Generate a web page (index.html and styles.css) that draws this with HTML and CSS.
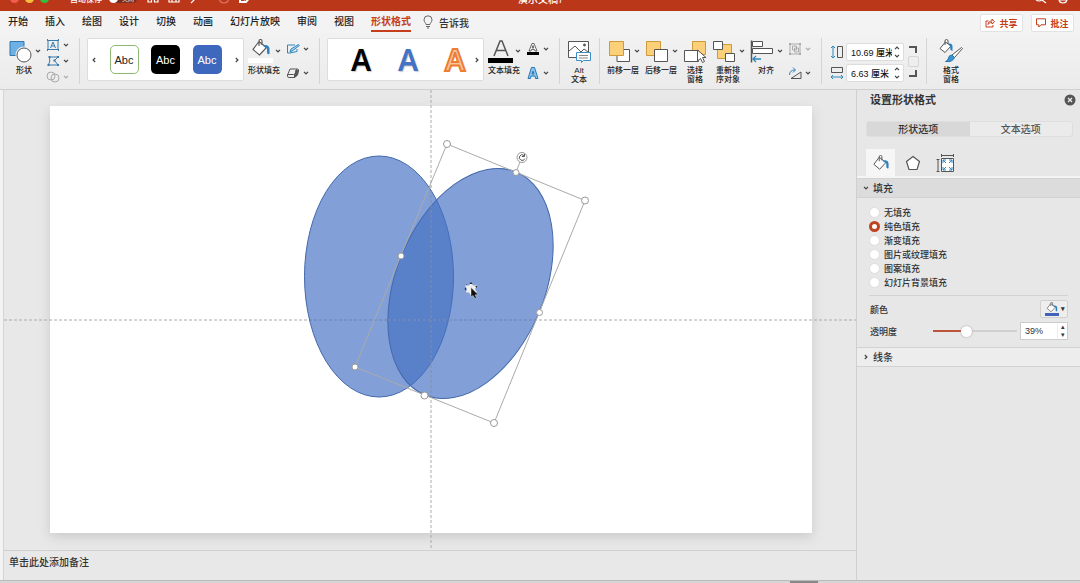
FILE: index.html
```html
<!DOCTYPE html>
<html lang="zh-CN">
<head>
<meta charset="utf-8">
<title>演示文稿7</title>
<link rel="stylesheet" href="styles.css">
</head>
<body>
<svg class="defs" aria-hidden="true">
  <symbol id="chev" viewBox="0 0 6 4"><path d="M1 .8 3 2.9 5 .8" fill="none" stroke="currentColor" stroke-width="1.2"/></symbol>
  <symbol id="bucket" viewBox="0 0 20 18"><path d="M8 2.5 2 10.5l6.5 5.5 7-7.500L8 2.500M8 7V2a1.500 1.500 0 0 1 3 0v4" fill="#fff" stroke="#555" stroke-width="1.100"/><path d="M11.500 6.500c4-1.500 6.500 0 7 3v5.500c-2 .5-2.500-.5-2.500-2V9.500z" fill="#2f7fbd"/></symbol>
</svg>
<div class="app">
  <header class="titlebar">
    <div class="titlebar-row">
      <div class="lights"><i class="light red"></i><i class="light yellow"></i><i class="light green"></i></div>
      <span class="autosave">自动保存</span>
      <span class="switch"><i></i><b>关闭</b></span>
      <svg class="quick" viewBox="0 0 106 22" fill="none" stroke="#fff" stroke-width="1.200"><path d="M1 8v6h3.500v-4M7.500 10v4H11V8M22 6v8h10V6M25 14v-3h4v3M44 15l8-8M53 11l4-1"/><circle cx="77" cy="10" r="5" stroke="#df7763"/><path d="M93 8v6h6l5-6M97 12l6-7" stroke-width="2"/></svg>
      <h1 class="doc-title">演示文稿7</h1>
      <svg class="tools" viewBox="0 0 36 22" fill="none" stroke="#fff" stroke-width="1.200"><circle cx="5" cy="9" r="4"/><path d="m8 12 4 3M25 9v2q0 4 4 4t4-4V9zM25 12h8"/></svg>
    </div>
  </header>

  <nav class="tabs">
    <div class="tab-list">
      <button class="tab">开始</button><button class="tab">插入</button><button class="tab">绘图</button><button class="tab">设计</button><button class="tab">切换</button><button class="tab">动画</button><button class="tab">幻灯片放映</button><button class="tab">审阅</button><button class="tab">视图</button><button class="tab active">形状格式</button>
    </div>
    <button class="tell"><svg width="10" height="14" viewBox="0 0 10 14" fill="none" stroke="#666"><path d="M3 9.500C3 8 1 7 1 4.800a4 4 0 0 1 8 0C9 7 7 8 7 9.500zM3 11.500h4M4 13h2"/></svg>告诉我</button>
    <div class="actions">
      <button class="action"><svg width="10" height="10" viewBox="0 0 10 10" fill="none" stroke="#c43e1c"><path d="M3.500 3H1v6h7V7M3 6.500c.5-3 2-3.500 4-3.500V1l2.500 2.800L7 6V4.500C5 4.500 4 5 3 6.500z"/></svg>共享</button>
      <button class="action"><svg width="10" height="10" viewBox="0 0 10 10" fill="none" stroke="#c43e1c"><path d="M.5.8h9v6H5L2.800 9V6.800H.5z"/></svg>批注</button>
    </div>
  </nav>

  <div class="ribbon">
    <button class="big"><span class="face"><svg class="ico" viewBox="0 0 24 24"><path d="M2 2.500h14v14H2z" fill="#6cb0e6" stroke="#3577ad"/><circle cx="16" cy="16" r="8.500" fill="#f0f0f0"/><circle cx="16" cy="16" r="7" fill="#fff" stroke="#555"/></svg><svg class="chev"><use href="#chev"/></svg></span><span class="label">形状</span></button>
    <div class="stack three">
      <button class="small" aria-label="文本框"><svg class="sico" viewBox="0 0 14 12" fill="none" stroke="#397bac"><path d="M2 1.500h10v9H2z"/><path d="m4.500 9 2.500-6 2.500 6M5.300 7h3.400"/><path d="M1 1h1M12 1h1M1 11h1M12 11h1" stroke-width="2"/></svg><svg class="chev"><use href="#chev"/></svg></button>
      <button class="small" aria-label="编辑形状"><svg class="sico" viewBox="0 0 14 12" fill="none" stroke="#397bac"><path d="M3.500 2H12L8.500 5.500 12 10H2.500Q4.500 6 3.500 2"/><path d="M2.500 2h2M11 2h2M1.500 10h2M11 10h2M7.500 5.500h2" stroke-width="2"/></svg><svg class="chev"><use href="#chev"/></svg></button>
      <button class="small dim" aria-label="合并形状"><svg class="sico" viewBox="0 0 14 12" fill="none" stroke="#aaa"><circle cx="5" cy="5" r="4"/><circle cx="9" cy="7" r="4"/></svg><svg class="chev"><use href="#chev"/></svg></button>
    </div>
    <i class="sep"></i>
    <div class="gallery">
      <button class="arrow" aria-label="上一个"><svg class="chev prev"><use href="#chev"/></svg></button>
      <button class="swatch outline">Abc</button><button class="swatch black">Abc</button><button class="swatch blue">Abc</button>
      <button class="arrow" aria-label="下一个"><svg class="chev right"><use href="#chev"/></svg></button>
    </div>
    <button class="big"><span class="face fill-face"><span class="fill-icon"><svg viewBox="0 0 20 18" width="20" height="18"><use href="#bucket"/></svg><i class="bar white"></i></span><svg class="chev"><use href="#chev"/></svg></span><span class="label">形状填充</span></button>
    <div class="stack">
      <button class="small" aria-label="形状轮廓"><svg class="sico" viewBox="0 0 14 12" fill="none" stroke="#2f86bd"><path d="M9 2H1.500v8H4l7-1.500V6"/><path d="m4 9 1-3 7.500-4.500.8 1L7 7.500z" fill="#a6d1ed"/></svg><svg class="chev"><use href="#chev"/></svg></button>
      <button class="small" aria-label="形状效果"><svg class="sico" viewBox="0 0 14 12" fill="#eee" stroke="#555"><path d="M4 2h7.500Q13 2 12.500 4l-1 4L9 10.500H3Q1 10.500 1.500 8z"/><path d="M1.500 7.500h6Q9 7.500 9.500 6l1-4M8.500 7.500v3"/><path d="m9 8 1-5 2 .5-1 4.500-2 2z" fill="#555"/></svg><svg class="chev"><use href="#chev"/></svg></button>
    </div>
    <i class="sep"></i>
    <div class="gallery art">
      <button class="wordart ink">A</button><button class="wordart azure">A</button><button class="wordart orange">A</button>
      <button class="arrow" aria-label="更多"><svg class="chev right"><use href="#chev"/></svg></button>
    </div>
    <button class="big"><span class="face fill-face"><span class="fill-icon"><svg viewBox="0 0 20 18" width="20" height="18"><path d="m3 17 6-15h2l6 15M5 11.500h10" fill="none" stroke="#555" stroke-width="1.500"/></svg><i class="bar"></i></span><svg class="chev"><use href="#chev"/></svg></span><span class="label">文本填充</span></button>
    <div class="stack">
      <button class="small" aria-label="文本轮廓"><svg class="sico" viewBox="0 0 14 12"><path d="m3 8 3-7.500h2L11 8H9l-.5-1.500h-3L5 8zM6.200 5 7 2.500 7.800 5z" fill="#fff" stroke="#555" stroke-width=".9"/><path d="M1 9h12v3H1z"/></svg><svg class="chev"><use href="#chev"/></svg></button>
      <button class="small" aria-label="文本效果"><svg class="sico" viewBox="0 0 14 12"><path d="M2 11.500 5.500.5h3l3.500 11H9.500L9 9H5l-.5 2.500z" fill="#8dc7ef" stroke="#2477b3"/><path d="m6 7 1-3 1 3z" fill="#fff" stroke="#2477b3"/></svg><svg class="chev"><use href="#chev"/></svg></button>
    </div>
    <i class="sep"></i>
    <button class="big narrow"><span class="face"><svg class="ico" viewBox="0 0 24 24" fill="#fff" stroke="#555"><path d="M1.500 2.500h20v16h-20z"/><path d="m2 12 6-5 6 6 3-3 4 3" fill="none"/><circle cx="17.500" cy="6" r="1" fill="#555"/><path d="M9.500 13.500h14v8h-7l-2 2v-2h-5z" stroke="#3a90c6"/><path d="M12 16.500h9M12 19h9" stroke="#888"/></svg></span><span class="label">Alt<br>文本</span></button>
    <i class="sep"></i>
    <button class="big"><span class="face"><svg class="ico" viewBox="0 0 24 24"><path d="M10 10.500h12.500v12H10z" fill="#fff" stroke="#555"/><path d="M2.500 2.500h14v14h-14z" fill="#fbd078" stroke="#cd9b3c"/></svg><svg class="chev"><use href="#chev"/></svg></span><span class="label">前移一层</span></button>
    <button class="big"><span class="face"><svg class="ico" viewBox="0 0 24 24"><path d="M1.500 2.500h14v14h-14z" fill="#fbd078" stroke="#cd9b3c"/><path d="M9.500 10.500h13v12h-13z" fill="#fff" stroke="#555"/></svg><svg class="chev"><use href="#chev"/></svg></span><span class="label">后移一层</span></button>
    <button class="big narrow"><span class="face"><svg class="ico" viewBox="0 0 24 24"><path d="M9.500 2.500h13v13h-13z" fill="#fbd078" stroke="#cd9b3c"/><path d="M1.500 11.500h14v11h-14z" fill="#fff" stroke="#555"/><path d="M14.500 11v11l3-2.500 2 4 2-1-2-4h3.500z" fill="#fff" stroke="#555"/></svg></span><span class="label">选择<br>窗格</span></button>
    <button class="big"><span class="face"><svg class="ico" viewBox="0 0 24 24"><path d="M5.500 5.500h14v14h-14z" fill="#fbd078" stroke="#cd9b3c"/><path d="M1.500 2.500h9v8h-9zM13.500 14.500h9v8h-9z" fill="#fff" stroke="#555"/></svg><svg class="chev"><use href="#chev"/></svg></span><span class="label">重新排<br>序对象</span></button>
    <button class="big"><span class="face"><svg class="ico" viewBox="0 0 24 24" fill="#fff" stroke="#555"><path d="M1.500 1.500v22" stroke-width="1.500"/><path d="M2.500 2.500h10v5h-10zM2.500 9.500h20v5h-20z"/><path d="M11 20H3m3-3-3 3 3 3" fill="none" stroke="#2f86bd" stroke-width="1.300"/></svg><svg class="chev"><use href="#chev"/></svg></span><span class="label">对齐</span></button>
    <div class="stack">
      <button class="small dim" aria-label="组合"><svg class="sico" viewBox="0 0 14 12" fill="none" stroke="#aaa"><path d="M2 1h10v10H2zM4.500 3h4v4h-4zM6.500 5h4v4h-4z"/><path d="M1 1h2M11 1h2M1 11h2M11 11h2" stroke-width="2"/></svg><svg class="chev"><use href="#chev"/></svg></button>
      <button class="small" aria-label="旋转"><svg class="sico" viewBox="0 0 14 12" fill="none" stroke="#555"><path d="M3 11.500h10V5z"/><path d="M1.500 8Q1.500 3 7 3M5 .5 7.500 3 5 5.500" stroke="#2f86bd"/></svg><svg class="chev"><use href="#chev"/></svg></button>
    </div>
    <i class="sep"></i>
    <div class="size">
      <div class="size-rows">
        <div class="size-row"><svg class="sico" viewBox="0 0 14 14" fill="none" stroke="#555"><path d="M7.500 1.500h5v11h-5z"/><path d="M3 1v12M1 3l2-2 2 2M1 11l2 2 2-2" stroke="#2f86bd"/></svg><div class="spin"><input aria-label="高度" value="10.69 厘米"><span class="spin-btns"><button aria-label="增加高度"><svg class="chev up"><use href="#chev"/></svg></button><button aria-label="减少高度"><svg class="chev"><use href="#chev"/></svg></button></span></div></div>
        <div class="size-row"><svg class="sico" viewBox="0 0 14 14" fill="none" stroke="#555"><path d="M1.500 1.500h11v5h-11z"/><path d="M1 11h12M3 9l-2 2 2 2M11 9l2 2-2 2" stroke="#2f86bd"/></svg><div class="spin"><input aria-label="宽度" value="6.63 厘米"><span class="spin-btns"><button aria-label="增加宽度"><svg class="chev up"><use href="#chev"/></svg></button><button aria-label="减少宽度"><svg class="chev"><use href="#chev"/></svg></button></span></div></div>
      </div>
      <div class="lock"><i class="bracket"></i><input type="checkbox" aria-label="锁定纵横比"><i class="bracket bottom"></i></div>
    </div>
    <i class="sep"></i>
    <button class="big pane"><span class="face"><svg class="ico" viewBox="0 0 24 24"><path d="M6.500 3 1 9.500l5 4L12 7zM6 6V2a1.500 1.500 0 0 1 3 0v3" fill="#fff" stroke="#555"/><path d="M9 5c3-1 4 0 4.500 2v5l-2-1-.5-4z" fill="#2f7fbd"/><path d="M22.500 8.500 13 16l2.500 2.500 8-9z" fill="#fff" stroke="#555"/><path d="M13 16q-3 0-3.500 3T6.500 22.500q7 1 9-4z" fill="#3b93d4" stroke="#2776ac"/></svg></span><span class="label">格式<br>窗格</span></button>
  </div>

  <div class="workspace">
    <main class="editor">
      <svg class="canvas" viewBox="4 90 852 460" role="img" aria-label="两个相交的椭圆">
        <defs><filter id="shade" x="-5%" y="-5%" width="110%" height="112%"><feDropShadow dx="0" dy="4" stdDeviation="6" flood-opacity=".13"/></filter></defs>
        <rect x="50" y="106" width="762" height="427" fill="#fff" filter="url(#shade)"/>
        <path class="guide" d="M4 320H856M431 90V550"/>
        <ellipse class="shape" cx="379" cy="276.500" rx="74.500" ry="120.500"/>
        <ellipse class="shape" cx="470.500" cy="283.500" rx="74.500" ry="120.500" transform="rotate(22.200 470.500 283.500)"/>
        <path class="guide soft" d="M431 185V398M388 320H452"/>
        <path class="frame" d="M447 144 585 200.500 494 423 355 367zM516 172l6-15"/>
        <g class="handles">
          <circle cx="447" cy="144" r="3.500"/><circle cx="585" cy="200.500" r="3.500"/><circle cx="494" cy="423" r="3.500"/><circle cx="355" cy="367" r="3"/>
          <circle cx="516" cy="172.500" r="3"/><circle cx="539.500" cy="312.500" r="3"/><circle cx="424.500" cy="395.500" r="3.500"/><circle cx="401" cy="256" r="3"/>
          <circle cx="522" cy="157.500" r="5"/>
        </g>
        <path d="M524 155.500a2.800 2.800 0 1 0 .8 3M524.500 154v2.500H522" fill="none" stroke="#555"/>
        <path d="m471 282.500 2 3h4l-2 3.500 2 3.500h-4l-2 3-2-3h-3l1-3.500-2-3.500h4z" fill="#eee"/>
        <path d="m469.500 284 1.500-2 1.500 2zM466 287.500l-1.500 1.500 1.500 1.500zM475 286h2v2zM466 285v-1h1z" fill="#222"/>
        <path d="m471 287.500 7 7-3 .5 1.500 2.500-1.500 1-2-3-2 1.500z" fill="#111" stroke="#ddd" stroke-width=".5"/>
      </svg>
      <textarea class="notes" aria-label="备注" rows="1">单击此处添加备注</textarea>
    </main>

    <aside class="panel">
      <div class="panel-head"><h2>设置形状格式</h2><button class="close" aria-label="关闭"><svg width="12" height="12" viewBox="0 0 12 12"><circle cx="6" cy="6" r="5.500" fill="#555"/><path d="m4 4 4 4M8 4 4 8" stroke="#eee" stroke-width="1.300"/></svg></button></div>
      <div class="segments"><button class="seg on">形状选项</button><button class="seg">文本选项</button></div>
      <div class="icon-tabs">
        <button class="icon-tab on" aria-label="填充与线条"><svg width="18" height="16" viewBox="0 0 20 18"><use href="#bucket"/></svg></button>
        <button class="icon-tab" aria-label="效果"><svg width="16" height="16" viewBox="0 0 16 16"><path d="m8 1.500 6.500 5L12 14.500H4L1.500 6.500z" fill="#fff" stroke="#555" stroke-width="1.200"/></svg></button>
        <button class="icon-tab" aria-label="大小与属性"><svg width="18" height="18" viewBox="0 0 18 18" fill="none" stroke="#555"><path d="M5.500 4.500h12v13h-12z" fill="#fff"/><path d="M5 1.500h13M5.500 0v3M17.500 0v3M2 5v13M.5 5.500h3M.5 17.500h3"/><path d="m7 6 3 3M16 6l-3 3M7 16l3-3M16 16l-3-3M7 9V6h3M13 6h3v3M7 13v3h3M13 16h3v-3" stroke="#2f86bd"/></svg></button>
      </div>
      <button class="section open"><svg class="chev"><use href="#chev"/></svg>填充</button>
      <div class="section-body">
        <fieldset class="radios">
          <label><input type="radio" name="fill">无填充</label>
          <label><input type="radio" name="fill" checked>纯色填充</label>
          <label><input type="radio" name="fill">渐变填充</label>
          <label><input type="radio" name="fill">图片或纹理填充</label>
          <label><input type="radio" name="fill">图案填充</label>
          <label><input type="radio" name="fill">幻灯片背景填充</label>
        </fieldset>
        <div class="field"><span>颜色</span><button class="color" aria-label="颜色"><span><svg width="14" height="11" viewBox="0 0 20 18"><use href="#bucket"/></svg><i></i></span><b>▾</b></button></div>
        <div class="field"><label for="opacity">透明度</label><input class="slider" id="opacity" type="range" value="39"><div class="percent"><input aria-label="透明度百分比" value="39%"><span><button aria-label="增加">▴</button><button aria-label="减少">▾</button></span></div></div>
      </div>
      <button class="section closed"><svg class="chev right"><use href="#chev"/></svg>线条</button>
    </aside>
  </div>
  <footer class="status"><i></i></footer>
</div>
</body>
</html>
```
FILE: styles.css
```css
* { box-sizing: border-box; }
html, body { height: 100%; margin: 0; }
body, button, input, textarea {
  font-family: "Liberation Sans", "Noto Sans CJK SC", sans-serif;
  font-size: 10px;
  font-weight: 500;
  color: #333;
}
button { padding: 0; border: 0; background: none; }
svg { flex: none; display: block; }
.defs { position: absolute; width: 0; height: 0; }
.app { display: flex; flex-direction: column; height: 100vh; overflow: hidden; background: #e8e8e8; }

.titlebar { height: 11px; flex: none; overflow: hidden; background: #bb371a; display: flex; align-items: flex-end; color: #fff; }
.titlebar-row { display: flex; align-items: center; width: 100%; height: 23px; padding: 0 10px 2px; }
.lights { display: flex; gap: 6px; width: 60px; }
.light { width: 9px; height: 9px; border-radius: 50%; }
.red { background: #f25b50; }
.yellow { background: #f6bd3c; }
.green { background: #2fc23f; }
.autosave { font-size: 8px; width: 39px; }
.switch { display: flex; align-items: center; width: 28px; height: 9px; border-radius: 5px; background: #7c2c1b; }
.switch i { width: 9px; height: 9px; border-radius: 50%; background: #fff; }
.switch b { font-size: 6px; margin-left: 4px; font-weight: 400; }
.quick { width: 106px; height: 22px; margin-left: 10px; }
.doc-title { flex: 1; margin: 0; padding-left: 265px; font-size: 10px; font-weight: 500; }
.tools { width: 36px; height: 22px; }

.tabs { display: flex; align-items: center; height: 22px; flex: none; padding: 0 6px 0 8px; background: #f3f3f3; }
.tab-list { display: flex; gap: 17px; }
.tab { height: 20px; padding-top: 2px; line-height: 16px; border-bottom: 2px solid transparent; color: #222; }
.tab.active { color: #c43e1c; border-color: #c43e1c; font-weight: 700; }
.tell { display: flex; align-items: center; gap: 6px; margin-left: 12px; }
.actions { display: flex; gap: 8px; margin-left: auto; }
.action { display: flex; align-items: center; justify-content: center; gap: 4px; width: 43px; height: 18px; margin-top: 2px; background: #fff; border: 1px solid #e2e2e2; border-radius: 2px; color: #c43e1c; font-size: 9px; font-weight: 700; }

.ribbon { display: flex; gap: 4px; height: 57px; flex: none; padding: 5px 8px 0; background: linear-gradient(#f2f2f2, #ebebeb); border-bottom: 1px solid #d0d0d0; }
.sep { width: 1px; height: 46px; margin: 0 3px 0 3px; background: #d5d5d5; flex: none; }
.big { display: flex; flex-direction: column; width: 34px; flex: none; }
.narrow { width: 25px; }
.face { display: flex; align-items: center; height: 26px; }
.ico { width: 24px; height: 24px; }
.chev { width: 6px; height: 4px; margin-left: 3px; color: #444; }
.label { width: 32px; margin-top: 2px; font-size: 8px; line-height: 9px; text-align: center; white-space: nowrap; color: #222; }
.narrow .label { width: 24px; }
.fill-icon { display: flex; flex-direction: column; align-items: center; gap: 1px; width: 25px; }
.fill-face .chev { margin-left: 2px; }
.bar { width: 25px; height: 5px; background: #000; }
.bar.white { background: #fff; }
.stack { display: flex; flex-direction: column; gap: 12px; width: 26px; padding-top: 5px; flex: none; }
.stack.three { gap: 4px; padding-top: 1px; }
.small { display: flex; align-items: center; width: 26px; height: 12px; }
.sico { width: 14px; height: 12px; }
.dim .chev { color: #aaa; }
.gallery { display: flex; align-items: center; justify-content: space-between; width: 157px; height: 43px; padding: 0 3px; background: #fff; border: 1px solid #ddd; border-radius: 2px; flex: none; }
.arrow { width: 6px; height: 20px; }
.arrow .chev { margin: 0; }
.swatch { width: 29px; height: 29px; border-radius: 5px; font-size: 11px; font-weight: 400; }
.outline { border: 1px solid #8fba75; background: #fff; color: #222; }
.black { background: #000; color: #fff; }
.blue { background: #3e68bd; color: #fff; }
.art { padding-left: 21px; }
.wordart { width: 24px; font-family: "Noto Sans", sans-serif; font-size: 30px; line-height: 40px; font-weight: 600; text-shadow: 1px 1px 1px #ccc; }
.wordart + .wordart { margin-left: 16px; }
.ink { color: #000; }
.azure { color: #4472c4; }
.orange { color: #f8c5a0; -webkit-text-stroke: 2px #ed7d31; text-shadow: none; }

.size { display: flex; gap: 3px; flex: none; margin-left: 1px; }
.size-rows { display: flex; flex-direction: column; gap: 3px; padding-top: 5px; }
.size-row { display: flex; align-items: center; gap: 2px; }
.size .sico { height: 14px; }
.spin { display: flex; width: 58px; height: 18px; background: #fff; border: 1px solid #ddd; border-radius: 2px; }
.spin input { width: 45px; min-width: 0; padding: 0 0 0 4px; border: 0; background: none; font-size: 9px; color: #111; }
.spin-btns { display: flex; flex-direction: column; width: 11px; }
.spin-btns button { flex: 1; display: flex; align-items: center; }
.spin-btns .chev { margin: 0 2px; }
.up { transform: rotate(180deg); }
.lock { display: flex; flex-direction: column; align-items: center; gap: 3px; padding-top: 8px; width: 12px; }
.bracket { width: 8px; height: 7px; border: solid #555; border-width: 2px 2px 0 0; }
.bracket.bottom { border-width: 0 2px 2px 0; }
.lock input { appearance: none; width: 11px; height: 11px; margin: 0; border: 1px solid #d5d5d5; border-radius: 2px; background: #eee; }
.pane { align-items: center; }

.workspace { display: flex; flex: 1; min-height: 0; padding-left: 3px; background: #f3f3f3; }
.editor { display: flex; flex-direction: column; flex: 1; min-width: 0; background: #e8e8e8; border-left: 1px solid #d5d5d5; }
.canvas { flex: 1; width: 100%; min-height: 0; }
.guide { fill: none; stroke: #aaa; stroke-dasharray: 3 2; }
.guide.soft { opacity: .5; }
.shape { fill: #4472c4; fill-opacity: .67; stroke: #4368ab; }
.frame { fill: none; stroke: #aaa; }
.handles { fill: #fff; stroke: #999; }
.notes { height: 30px; flex: none; padding: 4px 5px; border: 0; border-top: 1px solid #d0d0d0; background: none; resize: none; line-height: 15px; overflow: hidden; }

.panel { width: 224px; flex: none; background: #e7e7e7; border-left: 1px solid #d0d0d0; }
.panel-head { display: flex; align-items: center; justify-content: space-between; height: 20px; padding: 0 4px 0 13px; }
.panel-head h2 { margin: 0; font-size: 11px; line-height: 16px; font-weight: 700; }
.segments { display: flex; margin: 11px 7px 0 9px; border-radius: 3px; background: #ebebeb; border: 1px solid #dedede; }
.seg { flex: 1; height: 14px; line-height: 13px; color: #555; }
.seg.on { background: #d8d8d8; color: #333; }
.icon-tabs { display: flex; gap: 3px; height: 41px; padding: 12px 0 0 9px; border-bottom: 2px solid #f5f5f5; }
.icon-tab { display: flex; align-items: center; justify-content: center; width: 29px; height: 27px; }
.icon-tab.on { background: #f6f6f6; }
.section { display: flex; align-items: center; gap: 4px; width: 100%; height: 20px; padding: 0 0 1px 3px; border: solid #d2d2d2; border-width: 1px 0; }
.open { background: #dcdcdc; }
.closed { background: #ededed; }
.prev { transform: rotate(90deg); }
.right { transform: rotate(-90deg); }
.section-body { padding: 7px 12px 5px 12px; font-size: 9px; }
.radios { margin: 0 0 2px; padding: 0 0 6px; border: 0; border-bottom: 1px solid #d3d3d3; }
.radios label { display: flex; align-items: center; gap: 4px; height: 14px; font-size: 9px; }
.radios input { appearance: none; width: 11px; height: 11px; margin: 0; border-radius: 50%; background: #fff; border: 1px solid #ddd; }
.radios input:checked { border: 3px solid #bd4321; }
.field { display: flex; align-items: center; height: 22px; padding-left: 1px; }
.color { display: flex; align-items: center; justify-content: space-between; width: 28px; height: 18px; margin-left: auto; padding: 0 2px 0 4px; border: 1px solid #d0d0d0; border-radius: 2px; background: #eee; }
.color i { display: block; width: 14px; height: 3px; background: #4062b8; }
.color b { font-size: 7px; }
.slider { appearance: none; flex: none; width: 84px; height: 12px; margin: 0 3px 0 auto; background: linear-gradient(90deg, #bd5439 39%, #d0d0d0 39%) center / 100% 2px no-repeat; }
.slider::-webkit-slider-thumb { appearance: none; width: 11px; height: 11px; border-radius: 50%; background: #fff; box-shadow: 0 0 2px #999; }
.percent { display: flex; width: 48px; height: 18px; background: #fff; border: 1px solid #ccc; }
.percent input { width: 36px; padding: 0 0 0 4px; border: 0; background: none; font-size: 9px; }
.percent span { display: flex; flex-direction: column; width: 10px; border-left: 1px solid #eee; }
.percent button { flex: 1; font-size: 7px; line-height: 8px; }

.status { height: 3px; flex: none; padding-left: 790px; background: #d6d6d6; border-top: 1px solid #bbb; }
.status i { display: block; width: 28px; height: 2px; background: #888; }
```
